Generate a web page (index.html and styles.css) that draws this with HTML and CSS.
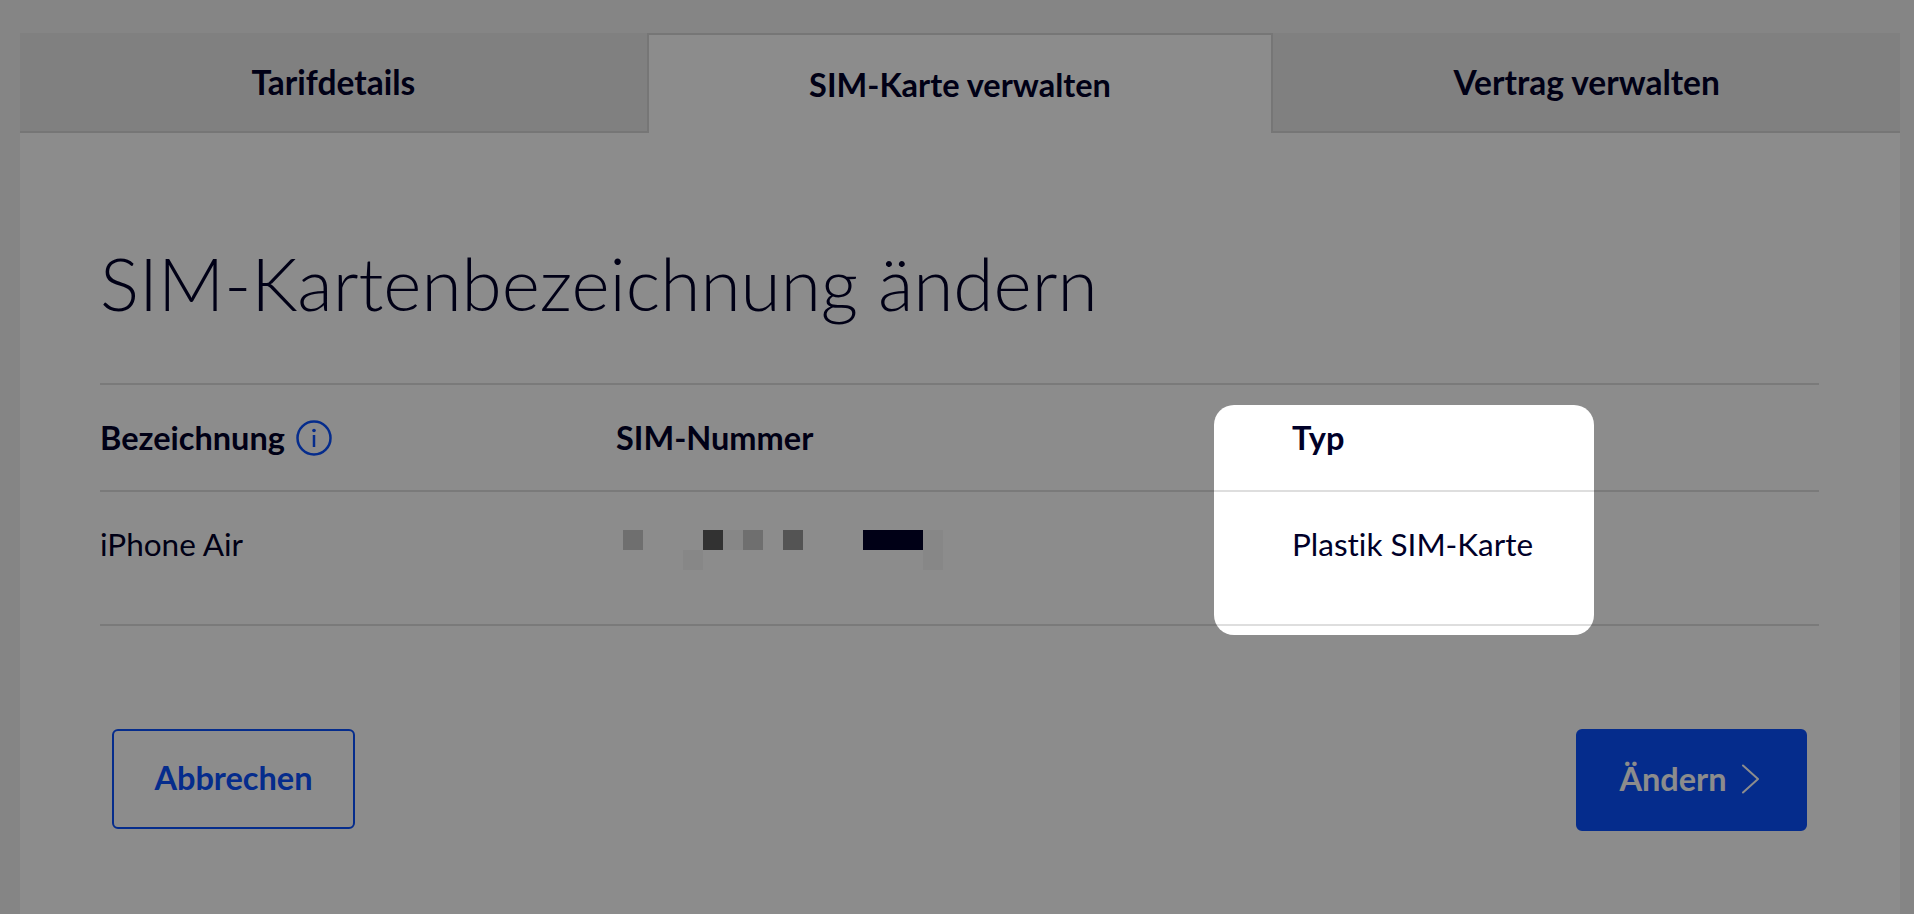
FILE: index.html
```html
<!DOCTYPE html>
<html lang="de">

<head>
    <title>SIM-Karte verwalten</title>
    <meta charset="UTF-8">
    <meta name="viewport" content="width=device-width, initial-scale=1.0">
    <link rel="stylesheet" href="styles.css">
</head>

<body>
    <div class="page">
        <div class="tabs">
            <div class="tab">Tarifdetails</div>
            <div class="tab active">SIM-Karte verwalten</div>
            <div class="tab">Vertrag verwalten</div>
        </div>
        <div class="content">
            <h1>SIM-Kartenbezeichnung ändern</h1>
            <div class="sim-table">
                <div class="cell head">
                    Bezeichnung
                    <svg class="info" width="36" height="36" viewBox="0 0 36 36" fill="none" stroke="currentColor" stroke-width="2.5">
                        <circle cx="18" cy="18" r="16.5" />
                        <path d="M18 15v12" />
                        <circle cx="18" cy="10.5" r="1.8" fill="currentColor" stroke="none" />
                    </svg>
                </div>
                <div class="cell head">SIM-Nummer</div>
                <div class="cell head typ">Typ</div>
                <div class="cell">iPhone Air</div>
                <div class="cell number">
                    <div class="mosaic">
                        <span class="m1"></span><span></span><span></span><span></span>
                        <span class="m2"></span><span class="m0"></span><span class="m1"></span><span></span>
                        <span class="m3"></span><span></span><span></span><span></span>
                        <span class="m4"></span><span class="m4"></span><span class="m4"></span><span class="m0"></span>
                        <span></span><span></span><span></span><span class="m0"></span>
                        <span></span><span></span><span></span><span></span>
                        <span></span><span></span><span></span><span></span>
                        <span></span><span></span><span></span><span class="m0"></span>
                    </div>
                </div>
                <div class="cell typ">Plastik SIM-Karte</div>
            </div>
            <div class="buttons">
                <button type="button" class="btn cancel">Abbrechen</button>
                <button type="button" class="btn save">
                    Ändern
                    <svg width="18" height="30" viewBox="0 0 18 30" fill="none" stroke="currentColor" stroke-width="2" stroke-linecap="round" stroke-linejoin="round">
                        <path d="M2 1.5l15 13.5L2 28.500" />
                    </svg>
                </button>
            </div>
        </div>
    </div>
    <div class="spotlight"></div>
</body>

</html>
```

FILE: styles.css
```css
* {
    margin: 0;
    padding: 0;
    box-sizing: border-box;
}

html,
body {
    height: 100%;
    overflow: hidden;
}

body {
    font-family: Lato, sans-serif;
    font-variant-ligatures: none;
    background-color: #f2f2f2;
    color: #000028;
}

.page {
    margin: 33px 14px 0 20px;
    height: 881px;
    background-color: #fff;
}

.tabs {
    display: grid;
    grid-template-columns: repeat(3, 1fr);
    height: 100px;
}

.tab {
    display: flex;
    align-items: center;
    justify-content: center;
    background-color: #e9e9e9;
    border-bottom: 2px solid #d8d8d8;
    font-size: 33.5px;
    font-weight: 700;
}

.tab.active {
    background-color: #fff;
    border: 2px solid #d8d8d8;
    border-bottom: none;
    font-size: 32.5px;
}

.content {
    padding: 0 81px 0 80px;
}

h1 {
    font-size: 73px;
    font-weight: 300;
    line-height: 100px;
    padding-top: 100px;
    height: 250px;
}

.sim-table {
    display: grid;
    grid-template-columns: 516px 676px 1fr;
    grid-template-rows: 107px 132px;
    border-top: 2px solid #dedede;
    border-bottom: 2px solid #dedede;
}

.cell {
    display: flex;
    align-items: center;
    gap: 11px;
    font-size: 31.5px;
}

.cell:nth-child(-n+3) {
    border-bottom: 2px solid #dedede;
}

.cell:nth-child(n+4) {
    align-items: flex-start;
    padding-top: 33px;
}

.head {
    font-size: 32.5px;
    font-weight: 700;
}

.info {
    color: #0a50ff;
}

.number {
    padding-top: 38px !important;
}

.mosaic {
    display: grid;
    grid-template-columns: repeat(16, 20px);
    grid-auto-rows: 20px;
    margin-left: 7px;
}

.m0 {
    background-color: #f6f6f6;
}

.m1 {
    background-color: #cbcbcb;
}

.m2 {
    background-color: #5c5c5c;
}

.m3 {
    background-color: #9a9a9a;
}

.m4 {
    background-color: #000028;
}

.buttons {
    display: flex;
    justify-content: space-between;
    padding: 103px 12px 0;
}

.btn {
    display: flex;
    align-items: center;
    justify-content: center;
    gap: 14px;
    padding-bottom: 3px;
    font-family: inherit;
    font-size: 32.5px;
    font-weight: 700;
    border-radius: 6px;
    border: 2px solid #0a50ff;
    cursor: pointer;
}

.cancel {
    width: 243px;
    height: 100px;
    background-color: #fff;
    color: #0a50ff;
}

.save {
    width: 231px;
    height: 102px;
    padding-right: 5px;
    background-color: #0a50ff;
    color: #fff;
}

.spotlight {
    position: absolute;
    left: 1214px;
    top: 405px;
    width: 380px;
    height: 230px;
    border-radius: 20px;
    box-shadow: 0 0 0 3000px rgba(0, 0, 0, 0.45);
}
```
